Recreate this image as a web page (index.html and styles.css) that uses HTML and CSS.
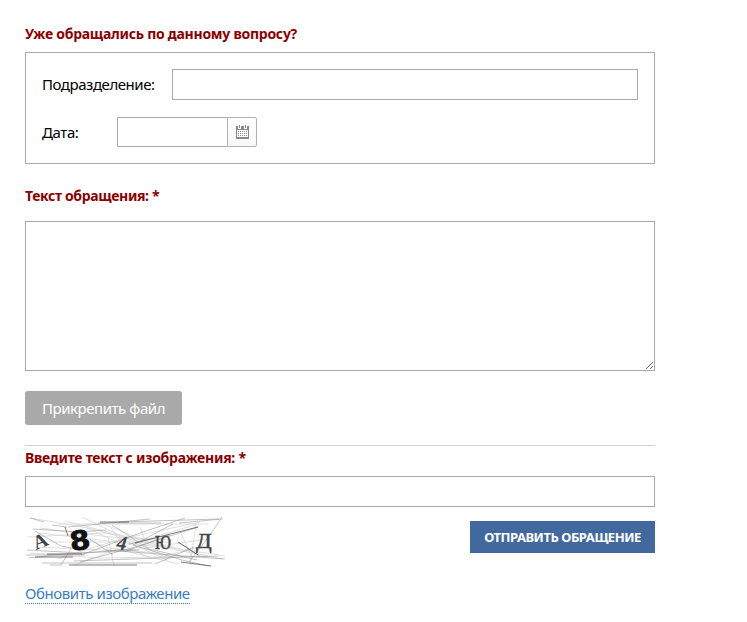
FILE: index.html
```html
<!DOCTYPE html>
<html lang="ru">
<head>
  <meta charset="UTF-8">
  <meta name="viewport" content="width=device-width, initial-scale=1.0">
  <title>Обращение</title>
  <link rel="stylesheet" href="styles.css">
</head>
<body>

<form class="appeal">
  <div class="title title-previous">Уже обращались по данному вопросу?</div>
  <div class="previous">
    <div class="row">
      <label class="label-department" for="department">Подразделение:</label>
      <input class="field" type="text" id="department">
    </div>
    <div class="row row-date">
      <label class="label-date" for="date">Дата:</label>
      <div class="date">
        <input class="date-field" type="text" id="date">
        <button class="date-button" type="button" aria-label="Календарь">
          <svg width="13" height="14" viewBox="0 0 13 14" shape-rendering="crispEdges">
            <path fill="#888" d="M0 1h2v3h3V1h3v3h3V1h2v13H0zM3 0h1v3H3zM9 0h1v3H9z"/>
            <path fill="#fbfbfb" d="M1 5h11v7H1z"/>
            <path stroke="#888" stroke-dasharray="1 1" d="M2 6.5h9M2 8.5h9M2 10.5h9"/>
          </svg>
        </button>
      </div>
    </div>
  </div>

  <label class="title title-text" for="text">Текст обращения: *</label>
  <textarea class="text" id="text"></textarea>

  <button class="attach" type="button">Прикрепить файл</button>

  <div class="check">
    <label class="title title-check" for="code">Введите текст с изображения: *</label>
    <input class="field" type="text" id="code">
    <div class="bottom">
      <svg class="captcha" width="200" height="50" viewBox="0 0 200 50">
        <g class="noise-light">
          <path d="M5 1l58 10 60 16 77 12M40 4l63 16 80 19M3 20l76-4 66 10M15 16l120 14M15 11l70 9 63 3M50 48l52-20 71-21M32 42l64-20 79-17M45 15l38 16 47 5M76 6l60 24 62 12M57 0l87 42M92 20l50 23M34 7h149M5 36l70 5 109-2M10 30l90 4 83-12M25 25h104M92 32l62 15M62 11l65 31 47-12M98 29l-12-18M83 20l6 29M155 14l12 27M115 10l8 22M171 7l-6 41"/>
        </g>
        <g class="noise">
          <path d="M5 1l14 4M8 12l45 3 28-2M10 14l26 15 16 3M46 32l-10 16H25M94 5l100-3M197 0l-12 18-21 27M197 2l-43 4M160 1l-45 15-59 22M173 10l-56 18-62 17M148 7l-40 21 49 15 27 6M73 6h63M81 33l119 9M2 33l55 3 51-4M4 41l35-4 75-4M1 38h59M17 46h110M49 44l144-5M87 8l37 24 48 11M99 35l46-17M153 25l22 14M27 8l15 2M104 27l39-9M65 22l23 16M130 47l39-17M125 2l-82 8"/>
        </g>
        <g class="noise-dark">
          <path d="M40 10l3 9M75 5h29M44 48h68M153 25l20 13M156 45l30 4M110 26l63-16M10 40h38M22 37h35"/>
        </g>
        <g class="code">
          <text class="sign" font-size="20" transform="translate(11 33) rotate(-22)">А</text>
          <text class="sign sign-bold" font-size="28" transform="translate(47 34) rotate(-9) scale(1.2 1)">8</text>
          <text class="sign sign-four" font-size="20" transform="translate(91 32) rotate(8)">4</text>
          <text class="sign sign-thin" font-size="19" transform="translate(130 32) scale(.82 1)">Ю</text>
          <text class="sign sign-thin" font-size="22" transform="translate(171 31) scale(1.05 1)">Д</text>
        </g>
      </svg>
      <button class="submit" type="button">ОТПРАВИТЬ ОБРАЩЕНИЕ</button>
    </div>
    <a class="refresh" href="#">Обновить изображение</a>
  </div>
</form>

</body>
</html>
```
FILE: styles.css
```css
* {
  box-sizing: border-box;
}
body {
  margin: 0;
  background: #fff;
  color: #000;
  font: 15px/20px "Noto Sans", sans-serif;
}
input, textarea, button {
  margin: 0;
  font: inherit;
  border-radius: 0;
}
.appeal {
  width: 630px;
  margin-left: 25px;
  padding-top: 24px;
}
.title {
  display: block;
  color: #8b0000;
  font-size: 14px;
  font-weight: bold;
  white-space: nowrap;
}
.title-previous {
  letter-spacing: -0.26px;
}
.previous {
  height: 112px;
  margin-top: 8px;
  padding: 16px;
  border: 1px solid #a9a9a9;
}
.row {
  display: flex;
  align-items: center;
}
.row-date {
  margin-top: 17px;
}
.label-department {
  width: 130px;
  padding-bottom: 2px;
  letter-spacing: -0.45px;
}
.label-date {
  width: 75px;
  letter-spacing: -0.4px;
}
.field {
  display: block;
  flex: 1;
  width: 100%;
  height: 31px;
  padding: 0 8px;
  border: 1px solid #a9a9a9;
  background: #fff;
}
.date {
  display: flex;
  width: 140px;
  height: 30px;
}
.date-field {
  width: 110px;
  padding: 0 8px;
  border: 1px solid #a9a9a9;
  border-right: 0;
}
.date-button {
  display: flex;
  align-items: center;
  justify-content: center;
  width: 30px;
  padding: 0;
  border: 1px solid #b2b2b2;
  border-radius: 0 2px 2px 0;
  background: linear-gradient(#fff, #f7f7f7);
}
.title-text {
  margin-top: 22px;
  letter-spacing: -0.35px;
}
.text {
  display: block;
  width: 630px;
  height: 150px;
  margin-top: 15px;
  padding: 8px;
  border: 1px solid #a9a9a9;
}
.attach {
  display: block;
  width: 157px;
  height: 34px;
  margin-top: 20px;
  padding: 0;
  border: 0;
  border-radius: 3px;
  background: #a9a9a9;
  color: #fff;
  letter-spacing: -0.45px;
  white-space: nowrap;
}
.check {
  margin-top: 20px;
  border-top: 1px solid #d0d0d0;
}
.title-check {
  padding: 2px 0 8px;
  letter-spacing: -0.26px;
}
.bottom {
  display: flex;
  align-items: flex-start;
  justify-content: space-between;
  padding-top: 10px;
}
.captcha {
  display: block;
}
.noise-light, .noise, .noise-dark {
  fill: none;
  stroke: #d5d5d5;
  stroke-width: 0.8;
}
.noise {
  stroke: #999;
  stroke-width: 0.6;
}
.noise-dark {
  stroke: #555;
}
.sign {
  fill: #444;
  font-family: "Liberation Serif", serif;
  font-weight: bold;
}
.sign-thin {
  stroke: #444;
  stroke-width: 0.5;
  font-weight: normal;
}
.sign-bold {
  fill: #111;
  stroke: #111;
  stroke-width: 1;
  font-family: "Liberation Sans", sans-serif;
}
.sign-four {
  font-style: italic;
}
.submit {
  width: 185px;
  height: 32px;
  margin-top: 4px;
  padding: 0;
  border: 0;
  background: #41699e;
  color: #fff;
  font-size: 13px;
  font-weight: bold;
  letter-spacing: -0.47px;
  white-space: nowrap;
}
.refresh {
  display: inline-block;
  margin-top: 16px;
  border-bottom: 1px dotted #3c7dc1;
  color: #3c7dc1;
  letter-spacing: -0.42px;
  text-decoration: none;
}
```
